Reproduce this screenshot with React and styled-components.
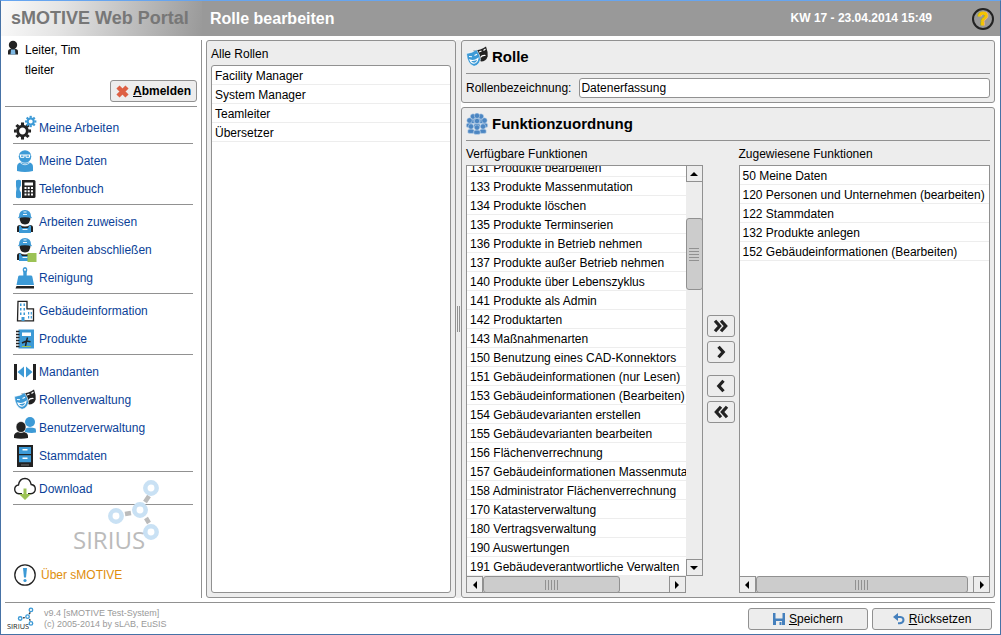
import React from 'react'
import styled, { createGlobalStyle, css } from 'styled-components'

const GlobalStyle = createGlobalStyle`
  *, *::before { box-sizing: border-box; }
  body {
    margin: 0;
    background: #fff;
    color: #000;
    font: 12px/19px "Liberation Sans", Arial, sans-serif;
  }
  button, input { font: inherit; color: inherit; }
  ul { margin: 0; padding: 0; list-style: none; }
`

const line = '#919191'
const face = '#ededed'
const blue = '#3d9ad6'
const dark = '#222'

/* ---------- icons ---------- */

const Svg = styled.svg`
  display: block;
  flex: none;
  overflow: visible;
`

const Icon = ({ size = 22, box = 22, children }) => (
  <Svg width={size} height={size} viewBox={`0 0 ${box} ${box}`} aria-hidden="true">{children}</Svg>
)

const Gear = ({ x, y, r, w, color }) => (
  <g transform={`translate(${x} ${y})`} stroke={color} fill="none">
    <circle r={r} strokeWidth={w} />
    {[0, 45, 90, 135, 180, 225, 270, 315].map(a => (
      <path key={a} d={`M0 ${-r - w / 3}v${-w}`} strokeWidth={w * 1.1} transform={`rotate(${a})`} />
    ))}
  </g>
)

const GearsIcon = () => (
  <Icon>
    <Gear x={8.5} y={14} r={4.8} w={2.8} color={dark} />
    <Gear x={16.7} y={4.5} r={3} w={2} color={blue} />
  </Icon>
)

const PersonIcon = () => (
  <Icon>
    <circle cx="11" cy="6.5" r="6.3" fill={blue} />
    <path d="M3 21v-4q0-4.500 4.500-4.500 3.500 2 7 0 4.500 0 4.500 4.500v4q-8 2-16 0z" fill={blue} />
    <path d="M5.500 5h11M6.500 5v2.300h3.500V5M12 5v2.300h3.500V5" stroke="#fff" fill="none" />
    <path d="M6.500 13q4.500 3.500 9 0" stroke="#fff" fill="none" strokeWidth=".7" />
  </Icon>
)

const PhoneIcon = () => (
  <Icon>
    <path d="M2 2.500q3-1.500 5 0v5q-1.500 2-1.500 3.500t1.500 3.500v5q-2 1.500-5 0v-5.500q1-3 0-6z" fill={blue} />
    <path d="M8 2h12q1.500 0 1.500 1.500v15q0 1.500-1.500 1.500H8z" fill={dark} />
    <path d="M10.500 4.500h8.500v3h-8.500zM10.500 9h2v2h-2zM13.700 9h2v2h-2zM17 9h2v2h-2zM10.500 12.300h2v2h-2zM13.700 12.300h2v2h-2zM17 12.300h2v2h-2zM10.500 15.600h2v2h-2zM13.700 15.600h2v2h-2zM17 15.600h2v2h-2z" fill="#fff" />
  </Icon>
)

const workerShape = (
  <>
    <path d="M5.500 7.500q5.500-2 11 0Q16.500 14 11 14.500 5.500 14 5.500 7.500z" fill={dark} />
    <path d="M5 6.500Q5 .3 11 0q6 .3 6 6.500l1.200 1.700q-7.200-1.700-14.400 0z" fill={blue} />
    <path d="M9.500 2h3M9 4.500h4" stroke="#fff" strokeWidth=".9" />
    <path d="M3 22v-4.500Q3 15 6 15q5 3 10 0 3 0 3 2.500V22z" fill={dark} />
    <path d="M6.500 15l1.500 3h6l1.500-3 1.500 1v7H5v-7z" fill={blue} />
    <path d="M8.500 19.500h5" stroke="#fff" strokeWidth=".9" />
  </>
)

const WorkerIcon = ({ done }) => (
  <Icon size={24} box={24}>
    <g transform="translate(1 0)">{workerShape}</g>
    {done && <path d="M14.500 15h9v9h-9z" fill="#9cc255" />}
  </Icon>
)

const BrushIcon = () => (
  <Icon>
    <path d="M9.300 8.500V5.500Q7.500.5 11 0q3.500.5 1.700 5.500v3h4.300q1 0 1.300 1L20 18H2.500l1.700-8.500q.3-1 1.300-1z" fill={blue} />
    <circle cx="11" cy="2.800" r="1" fill="#fff" />
    <path d="M2.500 19h17.500v2.500h-18.500z" fill={dark} />
  </Icon>
)

const BuildingIcon = () => (
  <Icon>
    <path d="M4 1.300h9v7.500h6.500v12H3.500z" fill="#fff" stroke={dark} strokeWidth="1.300" />
    <path d="M6 3.500h1.500v2.500H6zM9.500 3.500H11v2.500H9.500zM6 8h1.500v2.500H6zM9.500 8H11v2.500H9.500zM6 12.500h1.500V15H6zM9.500 12.500H11V15H9.500zM14 12h1.200v2.500H14zM16.700 12h1.200v2.500h-1.200zM14 16h1.200v2.500H14zM16.700 16h1.200v2.500h-1.200zM7.500 17h3v4h-3z" fill={blue} />
  </Icon>
)

const ProductIcon = () => (
  <Icon>
    <path d="M4.500 1.500h15.500v19H4.500z" fill={blue} />
    <path d="M2 3.500h3.500M2 6.500h3.500M2 9.500h3.500M2 12.500h3.500M2 15.500h3.500M2 18.500h3.500" stroke={dark} strokeWidth="1.400" />
    <path d="M8 4.500h9v3.500H8z" fill="#fff" />
    <path d="M11.500 18l1-5 1-3.500M12.500 13l4 .8M12.500 13l-4.500 2" stroke={dark} strokeWidth="1.400" />
    <path d="M8 18.500h9" stroke="#9cc255" />
  </Icon>
)

const ClientsIcon = () => (
  <Icon>
    <path d="M0 3h3v16H0zM19 3h3v16h-3z" fill={dark} />
    <path d="M10 5.500v11L3.500 11zM12 5.500v11l6.500-5.500z" fill={blue} />
  </Icon>
)

const MasksIcon = () => (
  <Icon>
    <path d="M7.500 4.500q7 0 12.500-4 2 5 1.700 10-1.700 5-6.700 5-6-4-7.500-11z" fill={dark} />
    <path d="M13 6l2.500-1M17.500 4.500l2-1.500M14.500 11.500q1.500-2.500 5-2" stroke="#fff" fill="none" strokeWidth="1.200" />
    <path d="M.5 7.500q6-.5 10-4 3.500 5 4 10-1.500 6-6.500 6.800Q1 18 .5 7.500z" fill={blue} stroke="#fff" strokeWidth=".6" />
    <path d="M3 10.500l3 .3M8.500 9.500l2.500-1.300M4 14q4 1.500 8-1.500-1 4.500-4 4.800Q5 17 4 14z" stroke="#fff" fill="none" strokeWidth="1.100" />
  </Icon>
)

const UsersIcon = () => (
  <Icon>
    <circle cx="16" cy="5" r="5" fill={blue} />
    <path d="M11 15V11.500q5-2 10.500 0 .5 1 .5 4-5 1-11-.5z" fill={blue} />
    <ellipse cx="7" cy="10" rx="5" ry="5.500" fill={dark} stroke="#fff" strokeWidth=".6" />
    <path d="M0 21v-2.500Q.5 15.500 4 15q3 2 6 0 4 1 4 4v2q-7 1.500-14 0z" fill={dark} />
  </Icon>
)

const CabinetIcon = () => (
  <Icon>
    <path d="M3 0h16v22H3z" fill={dark} />
    <path d="M5 2h12v7H5zM5 10.300h12v7H5z" fill={blue} />
    <path d="M8.500 4h5v1.500h-5zM8.500 12.500h5V14h-5z" fill="#fff" />
    <path d="M7 20h8" stroke="#777" />
  </Icon>
)

const CloudIcon = () => (
  <Icon>
    <path d="M8 15.800H5q-4.300-.5-4.300-4.800Q1 7.500 4.500 7q1-6.500 6.500-6.500 5 0 6.200 6Q21.300 7 21.300 11q0 4.300-4.800 4.800H14" fill="#fff" stroke={dark} strokeWidth="1.400" />
    <path d="M9.500 10.500h3V16H17l-6 6-6-6h4.500z" fill="#9cc255" />
  </Icon>
)

const InfoIcon = () => (
  <Icon>
    <circle cx="11" cy="11" r="10.200" fill="#fff" stroke={dark} strokeWidth="1.300" />
    <path d="M9 4h4l-1 9.500h-2z" fill={blue} />
    <circle cx="11" cy="16.500" r="1.600" fill={blue} />
  </Icon>
)

const GroupIcon = () => (
  <Icon>
    {[[7, 3.5], [15, 3.5], [11, 2.8], [3.5, 7.5], [11, 8], [18.5, 7.5], [5, 13.5], [17, 13.5], [11, 14.5]].map(([x, y]) => (
      <g key={`${x}-${y}`} fill="#4c86c2" stroke="#d5e3f1" strokeWidth=".5">
        <path d={`M${x - 3.2} ${y + 6.5}v-3q3.200-2.500 6.400 0v3q-3.200 1-6.400 0z`} />
        <circle cx={x} cy={y} r="2.700" />
      </g>
    ))}
  </Icon>
)

const UserBadge = () => (
  <Svg width="12" height="15" viewBox="0 0 12 15" aria-hidden="true">
    <circle cx="6" cy="5" r="4.200" fill={dark} />
    <path d="M1 14.500V11.500Q1 9 3.500 9h5q2.500 0 2.500 2.500v3z" fill={dark} />
    <path d="M4 9.500h4l.5 5h-5z" fill="#7fb9e4" />
  </Svg>
)

const CrossIcon = () => (
  <Icon size={13} box={13}>
    <path d="M2 2l9 9M11 2l-9 9" stroke="#dd6044" strokeWidth="4.500" />
  </Icon>
)

const SaveIcon = () => (
  <Icon size={12} box={12}>
    <path d="M0 0h12v12H0z" fill="#4580bd" />
    <path d="M2.500 0h7v5.500h-7zM3 8h6v4H3z" fill={face} />
    <path d="M6.500 9h2v3h-2z" fill="#4580bd" />
  </Icon>
)

const UndoIcon = () => (
  <Icon size={12} box={12}>
    <path d="M3 4h4.500q3 .3 3 3T7 10.300H5" fill="none" stroke="#4580bd" strokeWidth="2" />
    <path d="M5 0v8L0 4z" fill="#4580bd" />
  </Icon>
)

const Chevrons = ({ left, double }) => (
  <Svg width="16" height="12" viewBox="0 0 16 12" aria-hidden="true">
    <g fill="none" stroke={dark} strokeWidth="3.200" transform={left ? 'translate(16 0) scale(-1 1)' : undefined}>
      {double
        ? <path d="M2 .8L6.700 6 2 11.200M8 .8L12.700 6 8 11.200" />
        : <path d="M5.500.8L10.200 6l-4.700 5.200" />}
    </g>
  </Svg>
)

const Network = ({ ring, link, text, width, height }) => (
  <Svg width={width} height={height} viewBox="0 0 88 74" role="img" aria-label="SIRIUS">
    <g stroke={link} strokeWidth="4.500">
      <path d="M52 35l6-1M72 23l4-6M73 39l3 5" />
    </g>
    <g fill="none" stroke={ring} strokeWidth="4.500">
      <circle cx="43" cy="37" r="5.700" />
      <circle cx="67" cy="31" r="5.700" />
      <circle cx="78" cy="9" r="5.700" />
      <circle cx="78" cy="53" r="5.700" />
    </g>
    <text x="0" y="70" fill={text} fontFamily="'Open Sans', sans-serif" fontSize="24">SIRIUS</text>
  </Svg>
)

/* ---------- frame ---------- */

const Window = styled.div`
  display: flex;
  flex-direction: column;
  min-height: 100vh;
  border: 1px solid #4672a6;
  border-top-color: #66a5f0;
`

const TopBar = styled.header`
  display: flex;
  align-items: center;
  height: 35px;
  background: #999;
  color: #fff;
  font-weight: bold;
`

const Brand = styled.div`
  width: 201px;
  padding-left: 10px;
  background: linear-gradient(100deg, #fafafa 0%, #e4e4e4 30%, #999 100%);
  color: #777;
  font-size: 18px;
  line-height: 35px;
`

const PageTitle = styled.h1`
  flex: 1;
  margin: 0;
  padding-left: 8px;
  font-size: 16px;
`

const HelpButton = styled.button`
  width: 22px;
  height: 22px;
  margin: 0 6px 0 40px;
  padding: 0;
  border: 2px solid #222;
  border-radius: 50%;
  background: none;
  color: #f5c400;
  font-size: 18px;
  font-weight: bold;
  line-height: 18px;
  -webkit-text-stroke: 1px #f5c400;
`

const Body = styled.div`
  display: flex;
  flex: 1;
  padding: 4px 5px 4px 4px;
`

const Sidebar = styled.aside`
  display: flex;
  flex-direction: column;
  width: 197px;
  padding-right: 4px;
  border-right: 1px solid ${line};
`

const UserBox = styled.div`
  display: grid;
  grid-template-columns: 12px 1fr;
  column-gap: 6px;
  padding: 0 0 4px 2px;
  line-height: 20px;
  border-bottom: 1px solid ${line};
`

const UserName = styled.span`
  grid-column: 2;
`

const Button = styled.button`
  display: flex;
  align-items: center;
  justify-content: center;
  gap: 4px;
  height: 22px;
  padding: 0 5px;
  border: 1px solid ${line};
  border-radius: 3px;
  background: ${face};
  line-height: 20px;
  ${p => p.$strong && css`font-weight: bold;`}
  ${p => p.$wide && css`width: 120px;`}
`

const LogoutRow = styled.div`
  grid-column: 1 / -1;
  display: flex;
  justify-content: flex-end;
`

const Nav = styled.nav`
  padding: 7px 4px 0 8px;
`

const NavGroup = styled.ul`
  padding-bottom: 1px;
  margin-bottom: 3px;
  border-bottom: 1px solid ${line};
`

const NavLink = styled.a`
  display: flex;
  align-items: center;
  gap: ${p => (p.$accent ? '4px' : '2px')};
  height: 28px;
  color: ${p => (p.$accent ? '#e08e0b' : '#0b3f98')};
  text-decoration: none;
`

const IconSlot = styled.span`
  display: flex;
  justify-content: center;
  width: 24px;
`

const Emblem = styled.div`
  display: flex;
  justify-content: flex-end;
  margin: -29px 36px 0 0;
  pointer-events: none;
`

const About = styled.div`
  padding: 8px 4px 0 8px;
`

/* ---------- panels ---------- */

const Panel = styled.section`
  display: flex;
  flex-direction: column;
  padding: 4px;
  border: 1px solid ${line};
  border-radius: 3px;
  background: ${face};
  ${p => p.$fill && css`flex: 1;`}
`

const RolePanel = styled(Panel)`
  width: 250px;
  margin-left: 4px;
`

const Splitter = styled.div`
  display: flex;
  align-items: center;
  justify-content: center;
  width: 5px;
  background: ${face};
  &::before {
    content: '';
    width: 3px;
    height: 26px;
    border: solid ${line};
    border-width: 0 1px;
  }
`

const Main = styled.main`
  display: flex;
  flex: 1;
  flex-direction: column;
  gap: 4px;
  min-width: 0;
`

const PanelTitle = styled.h2`
  display: flex;
  align-items: center;
  gap: 4px;
  height: 29px;
  margin: 0 0 4px;
  padding-bottom: 5px;
  border-bottom: 1px solid ${line};
  font-size: 15px;
`

const Caption = styled.div`
  height: 20px;
  line-height: 18px;
`

const Field = styled.div`
  display: flex;
  align-items: center;
  gap: 8px;
`

const TextInput = styled.input`
  flex: 1;
  min-width: 0;
  height: 20px;
  padding: 0 1px;
  border: 1px solid ${line};
  border-radius: 3px;
  background: #fff;
`

const ListBox = styled.div`
  display: flex;
  flex: 1;
  flex-direction: column;
  border: 1px solid ${line};
  border-radius: 3px;
  background: #fff;
`

// the list never makes its panel grow, it is clipped to the space left
const List = styled.ul`
  display: flex;
  flex: 1;
  flex-direction: column;
  justify-content: ${p => (p.$atEnd ? 'flex-end' : 'flex-start')};
  contain: size;
  overflow: hidden;
`

const ListItem = styled.li`
  flex: none;
  height: 19px;
  padding-left: 3px;
  border-bottom: 1px solid ${face};
  line-height: 20px;
  white-space: nowrap;
`

const Transfer = styled.div`
  display: grid;
  flex: 1;
  grid-template-columns: minmax(0, 237fr) 28px minmax(0, 252fr);
  column-gap: 4px;
`

const Column = styled.div`
  display: flex;
  flex-direction: column;
`

const MoveButtons = styled.div`
  display: flex;
  flex-direction: column;
  justify-content: center;
  gap: 4px;
`

const MoveGroup = styled.div`
  display: flex;
  flex-direction: column;
  gap: 4px;
  padding-bottom: 8px;
`

const ScrollFrame = styled.div`
  display: grid;
  flex: 1;
  grid-template-columns: minmax(0, 1fr) ${p => (p.$vertical ? '17px' : '')};
  grid-template-rows: minmax(0, 1fr) 17px;
`

const Viewport = styled.div`
  display: flex;
  flex-direction: column;
  border: solid ${line};
  border-width: ${p => (p.$open ? '1px 0 0 1px' : '1px 1px 0')};
  background: #fff;
`

const Bar = styled.div`
  display: flex;
  flex-direction: ${p => (p.$vertical ? 'column' : 'row')};
  border: solid ${line};
  border-width: ${p => (p.$vertical ? '1px 1px 0 0' : '0 0 1px')};
`

const ArrowButton = styled.button`
  display: flex;
  align-items: center;
  justify-content: center;
  flex: none;
  width: 17px;
  height: 17px;
  margin: ${p => (p.$vertical ? '-1px -1px 0 0' : '0 0 -1px')};
  padding: 0;
  border: 1px solid ${line};
  background: ${face};
`

const Track = styled.div`
  display: flex;
  flex: 1;
  flex-direction: inherit;
`

const Space = styled.div`
  flex: ${p => p.$share} 1 0;
`

const Thumb = styled.div`
  display: flex;
  align-items: center;
  justify-content: center;
  flex: ${p => p.$share} 1 0;
  margin: ${p => (p.$vertical ? '0 -1px 0 0' : '0 0 -1px')};
  border: 1px solid ${line};
  border-radius: 3px;
  background: #ccc;
  &::before {
    content: '';
    width: ${p => (p.$vertical ? '10px' : '13px')};
    height: ${p => (p.$vertical ? '13px' : '10px')};
    background: repeating-linear-gradient(${p => (p.$vertical ? '180deg' : '90deg')}, ${line} 0 1px, transparent 1px 3px);
  }
`

const arrows = {
  up: 'M0 6l4-4 4 4z',
  down: 'M0 2l4 4 4-4z',
  left: 'M6 0L2 4l4 4z',
  right: 'M2 0l4 4-4 4z',
}

const Arrow = ({ dir, label, vertical }) => (
  <ArrowButton aria-label={label} $vertical={vertical}>
    <Svg width="8" height="8" viewBox="0 0 8 8"><path d={arrows[dir]} /></Svg>
  </ArrowButton>
)

const ScrollBar = ({ vertical, before, size, after }) => (
  <Bar $vertical={vertical}>
    <Arrow vertical={vertical} dir={vertical ? 'up' : 'left'} label={vertical ? 'Nach oben' : 'Nach links'} />
    <Track>
      <Space $share={before} />
      <Thumb $vertical={vertical} $share={size} />
      <Space $share={after} />
    </Track>
    <Arrow vertical={vertical} dir={vertical ? 'down' : 'right'} label={vertical ? 'Nach unten' : 'Nach rechts'} />
  </Bar>
)

/* ---------- footer ---------- */

const Footer = styled.footer`
  display: flex;
  align-items: center;
  gap: 4px;
  height: 32px;
  margin: 0 5px 0 4px;
  padding: 0 3px 0 2px;
  border-top: 1px solid ${line};
`

const Version = styled.div`
  flex: 1;
  padding-left: 6px;
  color: #999;
  font-size: 9px;
  line-height: 11px;
`

/* ---------- data ---------- */

const menu = [
  [['Meine Arbeiten', <GearsIcon />]],
  [['Meine Daten', <PersonIcon />], ['Telefonbuch', <PhoneIcon />]],
  [['Arbeiten zuweisen', <WorkerIcon />], ['Arbeiten abschließen', <WorkerIcon done />], ['Reinigung', <BrushIcon />]],
  [['Gebäudeinformation', <BuildingIcon />], ['Produkte', <ProductIcon />]],
  [['Mandanten', <ClientsIcon />], ['Rollenverwaltung', <MasksIcon />], ['Benutzerverwaltung', <UsersIcon />], ['Stammdaten', <CabinetIcon />]],
  [['Download', <CloudIcon />]],
]

const roles = ['Facility Manager', 'System Manager', 'Teamleiter', 'Übersetzer']

const available = [
  '131 Produkte bearbeiten',
  '133 Produkte Massenmutation',
  '134 Produkte löschen',
  '135 Produkte Terminserien',
  '136 Produkte in Betrieb nehmen',
  '137 Produkte außer Betrieb nehmen',
  '140 Produkte über Lebenszyklus',
  '141 Produkte als Admin',
  '142 Produktarten',
  '143 Maßnahmenarten',
  '150 Benutzung eines CAD-Konnektors',
  '151 Gebäudeinformationen (nur Lesen)',
  '153 Gebäudeinformationen (Bearbeiten)',
  '154 Gebäudevarianten erstellen',
  '155 Gebäudevarianten bearbeiten',
  '156 Flächenverrechnung',
  '157 Gebäudeinformationen Massenmutation',
  '158 Administrator Flächenverrechnung',
  '170 Katasterverwaltung',
  '180 Vertragsverwaltung',
  '190 Auswertungen',
  '191 Gebäudeverantwortliche Verwalten',
]

const assigned = [
  '50 Meine Daten',
  '120 Personen und Unternehmen (bearbeiten)',
  '122 Stammdaten',
  '132 Produkte anlegen',
  '152 Gebäudeinformationen (Bearbeiten)',
]

const Items = ({ items, atEnd, label }) => (
  <List $atEnd={atEnd} aria-label={label}>
    {items.map(item => <ListItem key={item}>{item}</ListItem>)}
  </List>
)

export default function App() {
  return (
    <>
      <GlobalStyle />
      <Window>
        <TopBar>
          <Brand>sMOTIVE Web Portal</Brand>
          <PageTitle>Rolle bearbeiten</PageTitle>
          <time dateTime="2014-04-23T15:49">KW 17 - 23.04.2014 15:49</time>
          <HelpButton aria-label="Hilfe">?</HelpButton>
        </TopBar>
        <Body>
          <Sidebar>
            <UserBox>
              <UserBadge />
              <UserName>Leiter, Tim</UserName>
              <UserName>tleiter</UserName>
              <LogoutRow>
                <Button $strong><CrossIcon /><span><u>A</u>bmelden</span></Button>
              </LogoutRow>
            </UserBox>
            <Nav>
              {menu.map(group => (
                <NavGroup key={group[0][0]}>
                  {group.map(([label, icon]) => (
                    <li key={label}>
                      <NavLink href="#"><IconSlot>{icon}</IconSlot>{label}</NavLink>
                    </li>
                  ))}
                </NavGroup>
              ))}
            </Nav>
            <Emblem><Network width={88} height={74} ring="#c9e1f4" link="#bbb" text="#bbb" /></Emblem>
            <About>
              <NavLink href="#" $accent><IconSlot><InfoIcon /></IconSlot>Über sMOTIVE</NavLink>
            </About>
          </Sidebar>
          <RolePanel>
            <Caption>Alle Rollen</Caption>
            <ListBox><Items items={roles} label="Alle Rollen" /></ListBox>
          </RolePanel>
          <Splitter />
          <Main>
            <Panel>
              <PanelTitle><MasksIcon />Rolle</PanelTitle>
              <Field>
                <label htmlFor="role-name">Rollenbezeichnung:</label>
                <TextInput id="role-name" defaultValue="Datenerfassung" />
              </Field>
            </Panel>
            <Panel $fill>
              <PanelTitle><GroupIcon />Funktionzuordnung</PanelTitle>
              <Transfer>
                <Column>
                  <Caption>Verfügbare Funktionen</Caption>
                  <ScrollFrame $vertical>
                    <Viewport $open><Items items={available} atEnd label="Verfügbare Funktionen" /></Viewport>
                    <ScrollBar vertical before={36} size={71} after={271} />
                    <ScrollBar before={0} size={138} after={49} />
                  </ScrollFrame>
                </Column>
                <MoveButtons>
                  <MoveGroup>
                    <Button aria-label="Alle zuweisen"><Chevrons double /></Button>
                    <Button aria-label="Zuweisen"><Chevrons /></Button>
                  </MoveGroup>
                  <Button aria-label="Entfernen"><Chevrons left /></Button>
                  <Button aria-label="Alle entfernen"><Chevrons left double /></Button>
                </MoveButtons>
                <Column>
                  <Caption>Zugewiesene Funktionen</Caption>
                  <ScrollFrame>
                    <Viewport><Items items={assigned} label="Zugewiesene Funktionen" /></Viewport>
                    <ScrollBar before={0} size={214} after={5} />
                  </ScrollFrame>
                </Column>
              </Transfer>
            </Panel>
          </Main>
        </Body>
        <Footer>
          <Network width={27} height={23} ring="#3d9ad6" link="#333" text="#222" />
          <Version>v9.4 [sMOTIVE Test-System]<br />(c) 2005-2014 by sLAB, EuSIS</Version>
          <Button $wide><SaveIcon /><span><u>S</u>peichern</span></Button>
          <Button $wide><UndoIcon /><span><u>R</u>ücksetzen</span></Button>
        </Footer>
      </Window>
    </>
  )
}
